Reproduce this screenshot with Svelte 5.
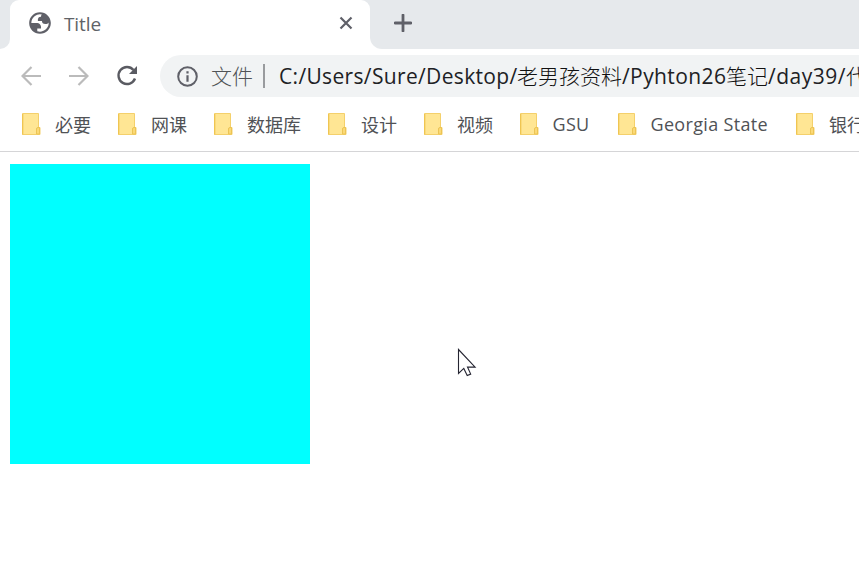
<script>
  const bookmarks = [
    { name: '必要', width: 96 },
    { name: '网课', width: 96 },
    { name: '数据库', width: 114 },
    { name: '设计', width: 96 },
    { name: '视频', width: 96 },
    { name: 'GSU', width: 98, latin: true },
    { name: 'Georgia State', width: 178, latin: true },
    { name: '银行', width: 90 }
  ];
  const address = [
    { text: 'C:/Users/Sure/Desktop/', width: 238, spacing: 0.34 },
    { text: '老男孩资料', width: 105, cjk: true },
    { text: '/Pyhton26', width: 104, spacing: 0.4 },
    { text: '笔记', width: 42, cjk: true },
    { text: '/day39/', width: 78, spacing: 0.5 },
    { text: '代', width: 21, cjk: true }
  ];
</script>

<div class="window">
  <header class="tabs">
    <div class="edge left"></div>
    <div class="tab">
      <svg class="globe" width="26" height="26" viewBox="0 0 24 24"><path fill="#5f6068" fill-rule="evenodd" d="M12 22C6.477 22 2 17.523 2 12S6.477 2 12 2s10 4.477 10 10-4.477 10-10 10zM4 12h4.400c3.407.022 4.922 1.730 4.543 5.127H9.488v2.470a8.004 8.004 0 0 0 10.498-8.083C19.327 12.504 18.332 13 17 13c-2.137 0-3.206-.916-3.206-2.750h-3.748c-.274-2.728.683-4.092 2.870-4.092 0-.975.327-1.597.811-1.970A8.004 8.004 0 0 0 4 12z"/></svg>
      <span>Title</span>
      <svg class="close" width="14" height="14" viewBox="0 0 14 14"><path d="M1.500 1.500 12.500 12.500M12.500 1.500 1.500 12.500" stroke="#5f6068" stroke-width="2.200"/></svg>
    </div>
    <div class="edge right">
      <svg width="18" height="18" viewBox="0 0 18 18"><path d="M9 1v16M1 9h16" stroke="#5f6068" stroke-width="2.800" stroke-linecap="round"/></svg>
    </div>
  </header>

  <nav class="toolbar">
    <svg width="20" height="20" viewBox="0 0 20 20"><path d="M20 10H2M10.500 1 1.500 10l9 9" fill="none" stroke="#bbb" stroke-width="2.200"/></svg>
    <svg width="20" height="20" viewBox="0 0 20 20"><path d="M0 10h18M9.500 1l9 9-9 9" fill="none" stroke="#bbb" stroke-width="2.200"/></svg>
    <svg width="22" height="22" viewBox="0 0 22 22"><path d="M17.500 5A8.500 8.500 0 1 0 19 13.500" fill="none" stroke="#5a5b62" stroke-width="2.400"/><path d="M21 1v8h-8z" fill="#5a5b62"/></svg>
    <div class="omnibox">
      <svg width="22" height="22" viewBox="0 0 22 22"><circle cx="11.500" cy="11.500" r="9.300" fill="none" stroke="#5f6068" stroke-width="2"/><path d="M11.500 6.200v2.300M11.500 10.200v6.500" stroke="#5f6068" stroke-width="2.200"/></svg>
      <span class="scheme">文件</span>
      <i></i>
      {#each address as part}
        <span class="part" class:cjk={part.cjk} style:width="{part.width}px" style:letter-spacing="{part.spacing ?? 0}px">{part.text}</span>
      {/each}
    </div>
  </nav>

  <nav class="bookmarks">
    {#each bookmarks as item}
      <div class="bookmark" style:width="{item.width}px">
        <svg width="19" height="22" viewBox="0 0 19 22"><path d="M.5.5H16.500V14.500H18v7H.5z" fill="#ffe694" stroke="#f4d06b"/><path d="M.7 1v20.500" stroke="#efc551" stroke-width="1.300"/><path d="M14.500 21v-5q0-1.500 1.500-1.500h1.500V21z" fill="#fbd976" stroke="#ecc454"/></svg>
        <span class:latin={item.latin}>{item.name}</span>
      </div>
    {/each}
  </nav>

  <main>
    <div class="box"></div>
    <svg class="cursor" width="20" height="30" viewBox="0 0 20 30"><path d="M1.500 1.500v24l5.300-5.100 3.400 7.200 3.500-1.500-3.200-7h7.600z" fill="#fff" stroke="#252532" stroke-width="1.100"/></svg>
  </main>
</div>

<style>
  .window {
    height: 573px;
    overflow: hidden;
    background: #fff;
    font-family: "Open Sans", "Noto Sans CJK SC", sans-serif;
    white-space: nowrap;
  }
  svg { display: block; flex: none; }
  .tabs { display: flex; height: 49px; background: #fff; }
  .edge { background: #e6e9ec; }
  .left { width: 10px; flex: none; border-bottom-right-radius: 10px; }
  .right { flex: 1; padding: 14px 0 0 24px; box-sizing: border-box; border-bottom-left-radius: 12px; }
  .tab {
    display: flex;
    align-items: center;
    width: 360px;
    height: 46px;
    flex: none;
    box-sizing: border-box;
    padding-left: 17px;
    background: linear-gradient(#e6e9ec, #e6e9ec) 0 0 / 100% 10px no-repeat;
    position: relative;
    z-index: 0;
    color: #5f6368;
    font-size: 19px;
    letter-spacing: -0.1px;
  }
  .tab::before {
    content: "";
    position: absolute;
    inset: 0;
    z-index: -1;
    border-radius: 9px 9px 0 0;
    background: #fff;
  }
  .tab span { margin: 2px 0 0 11px; }
  .close { margin-left: auto; margin-right: 17px; }
  .toolbar {
    display: flex;
    align-items: center;
    height: 42px;
    padding: 6px 0 0 21px;
  }
  .toolbar > svg:nth-child(2) { margin-left: 28px; }
  .toolbar > svg:nth-child(3) { margin-left: 27px; }
  .omnibox {
    display: flex;
    align-items: center;
    width: 730px;
    height: 42px;
    flex: none;
    margin-left: 22px;
    padding-left: 16px;
    box-sizing: border-box;
    border-radius: 21px 0 0 21px;
    background: #f1f3f4;
    font-size: 21px;
    color: #202124;
  }
  .scheme { width: 42px; margin-left: 13px; padding-bottom: 2px; color: #505357; font-family: "Noto Sans CJK SC", sans-serif; font-weight: 300; }
  i { width: 2px; height: 24px; margin: 0 14px 0 10px; background: #999b9e; flex: none; }
  .part { flex: none; }
  .cjk { padding-bottom: 2px; color: #111; font-family: "Noto Sans CJK SC", sans-serif; font-weight: 300; }
  .bookmarks {
    display: flex;
    align-items: center;
    height: 54px;
    padding-left: 22px;
    border-bottom: 1px solid #d5d5d7;
  }
  .bookmark {
    display: flex;
    align-items: center;
    flex: none;
    color: #505256;
    font-size: 18px;
  }
  .bookmark span { margin-left: 14px; }
  .bookmark .latin { margin-left: 13.5px; letter-spacing: 0.33px; }
  main { display: flex; padding: 12px 0 0 10px; }
  .box { width: 300px; height: 300px; background: #0ff; }
  .cursor { margin: 184px 0 0 147px; }
</style>
